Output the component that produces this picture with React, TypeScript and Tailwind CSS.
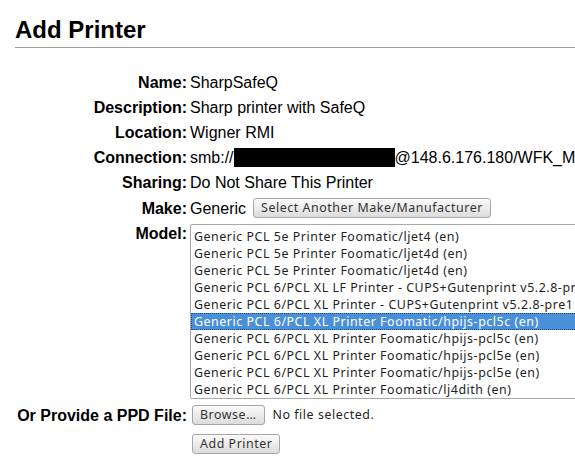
import type { JSX } from "react";

// CUPS "Add Printer" page, last step: pick the model / PPD
const models = [
  "Generic PCL 5e Printer Foomatic/ljet4 (en)",
  "Generic PCL 5e Printer Foomatic/ljet4d (en)",
  "Generic PCL 5e Printer Foomatic/ljet4d (en)",
  "Generic PCL 6/PCL XL LF Printer - CUPS+Gutenprint v5.2.8-pre1 (en)",
  "Generic PCL 6/PCL XL Printer - CUPS+Gutenprint v5.2.8-pre1 (en)",
  "Generic PCL 6/PCL XL Printer Foomatic/hpijs-pcl5c (en)",
  "Generic PCL 6/PCL XL Printer Foomatic/hpijs-pcl5c (en)",
  "Generic PCL 6/PCL XL Printer Foomatic/hpijs-pcl5e (en)",
  "Generic PCL 6/PCL XL Printer Foomatic/hpijs-pcl5e (en)",
  "Generic PCL 6/PCL XL Printer Foomatic/lj4dith (en)",
];

const selected = 5;

const uiFont = "font-['Noto_Sans',sans-serif] text-[12.4px] tracking-[0.55px]";

const Button = ({ children }: { children: string }): JSX.Element => (
  <button
    className={`${uiFont} h-[20px] px-[7px] leading-[18px] text-[#333333] border border-[#a6a6a6] rounded-[3px] bg-gradient-to-b from-[#fafafa] to-[#dcdcdc] shadow-[0_1px_0_#ffffff]`}
  >
    {children}
  </button>
);

const Label = ({ children, top }: { children: string; top?: boolean }): JSX.Element => (
  <div
    className={`text-right font-bold leading-[19px] py-[3px] ${top ? "" : "self-center"}`}
  >
    {children}
  </div>
);

const App = (): JSX.Element => {
  return (
    <div className="w-full overflow-hidden bg-white text-black font-['Liberation_Sans',Arial,sans-serif] text-[16px]">
      <div className="pl-[15px] pt-[16px] pb-[16px]">
        <h2 className="text-[24px] font-bold leading-[28px]">Add Printer</h2>
        <div className="h-px bg-[#9c9c9c] mt-[3px]" />

        <div className="grid grid-cols-[172px_auto] gap-x-[3px] mt-[22px] whitespace-nowrap">
          <Label>Name:</Label>
          <div className="leading-[19px] py-[3px]">SharpSafeQ</div>

          <Label>Description:</Label>
          <div className="leading-[19px] py-[3px]">Sharp printer with SafeQ</div>

          <Label>Location:</Label>
          <div className="leading-[19px] py-[3px]">Wigner RMI</div>

          <Label>Connection:</Label>
          <div className="leading-[19px] py-[3px] flex items-center">
            <span>smb://</span>
            <span className="inline-block w-[161px] h-[19px] bg-black" />
            <span>@148.6.176.180/WFK_MFP</span>
          </div>

          <Label>Sharing:</Label>
          <div className="leading-[19px] py-[3px]">Do Not Share This Printer</div>

          <Label>Make:</Label>
          <div className="leading-[19px] py-[3px] flex items-center gap-[7px]">
            <span>Generic</span>
            <Button>Select Another Make/Manufacturer</Button>
          </div>

          <Label top>Model:</Label>
          <div className="pt-[3px] pb-[3px]">
            <div
              role="listbox"
              className={`${uiFont} w-[450px] border border-[#a9a9a9] rounded-[2px] pt-[3px] bg-white`}
            >
              {models.map((m, i) => (
                <div
                  key={i}
                  className={`h-[17px] leading-[17px] pl-[3px] ${
                    i === selected
                      ? "bg-[#4a90d9] text-white outline-1 outline-dotted outline-[#1f4f80] -outline-offset-1"
                      : "text-[#1e1e1e]"
                  }`}
                >
                  {m}
                </div>
              ))}
            </div>
          </div>

          <Label>Or Provide a PPD File:</Label>
          <div className="py-[3px] flex items-center gap-[8px] pl-[2px]">
            <Button>Browse…</Button>
            <span className={`${uiFont} text-[#1e1e1e]`}>No file selected.</span>
          </div>

          <div />
          <div className="py-[3px] pl-[2px]">
            <Button>Add Printer</Button>
          </div>
        </div>
      </div>
    </div>
  );
};

export default App;
